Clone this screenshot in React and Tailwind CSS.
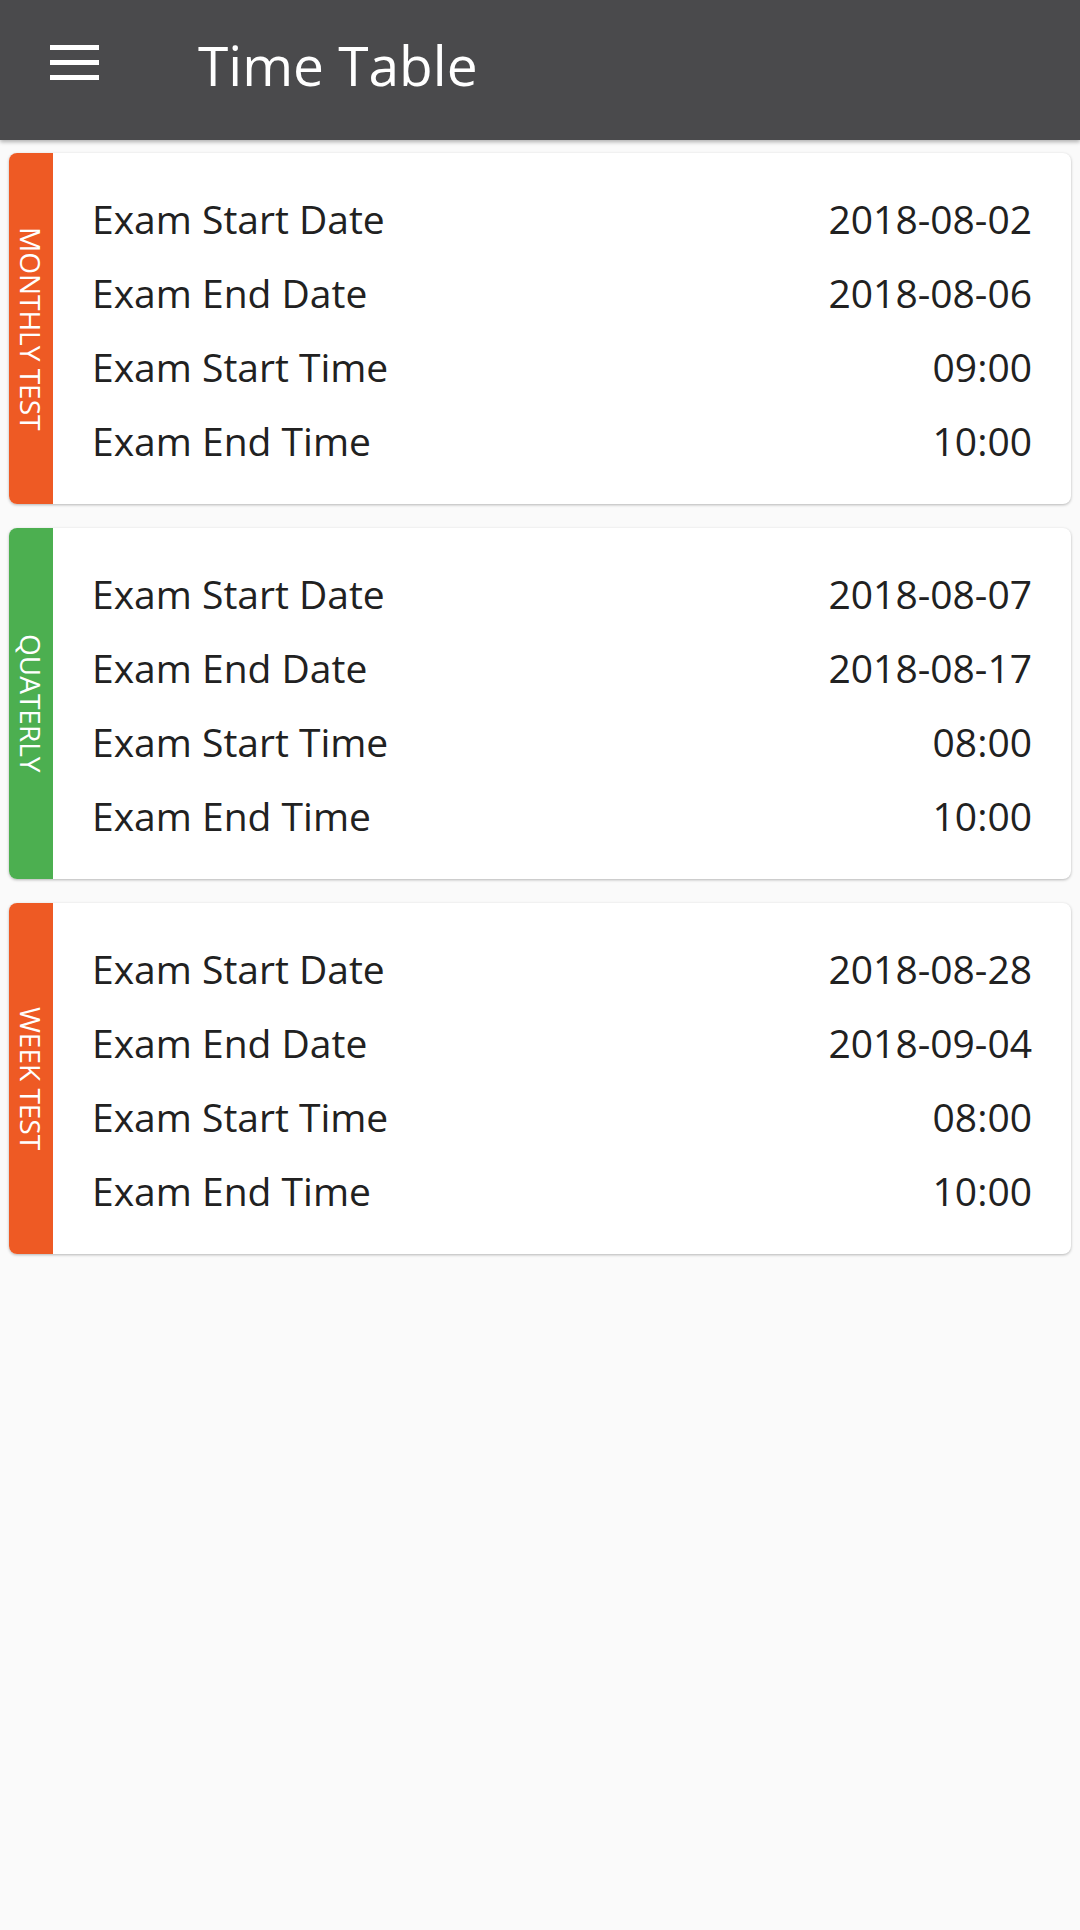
const exams = [
  {
    name: "MONTHLY TEST",
    color: "bg-[#ee5a24]",
    rows: [
      ["Exam Start Date", "2018-08-02"],
      ["Exam End Date", "2018-08-06"],
      ["Exam Start Time", "09:00"],
      ["Exam End Time", "10:00"],
    ],
  },
  {
    name: "QUATERLY",
    color: "bg-[#4caf50]",
    rows: [
      ["Exam Start Date", "2018-08-07"],
      ["Exam End Date", "2018-08-17"],
      ["Exam Start Time", "08:00"],
      ["Exam End Time", "10:00"],
    ],
  },
  {
    name: "WEEK TEST",
    color: "bg-[#ee5a24]",
    rows: [
      ["Exam Start Date", "2018-08-28"],
      ["Exam End Date", "2018-09-04"],
      ["Exam Start Time", "08:00"],
      ["Exam End Time", "10:00"],
    ],
  },
];

const ExamCard = ({ exam }) => (
  <div className="flex bg-white rounded-lg overflow-hidden shadow-[0_1px_3px_rgba(0,0,0,0.28)]">
    <div className={`${exam.color} w-[44px] flex items-center justify-center`}>
      <span className="[writing-mode:vertical-rl] text-white text-[28px] leading-none">
        {exam.name}
      </span>
    </div>
    <div className="flex-1 pl-[39px] pr-[39px] pt-[29px] pb-[26px]">
      {exam.rows.map(([label, value]) => (
        <div key={label} className="flex justify-between h-[74px] leading-[74px] text-[39px] text-[#212121]">
          <span>{label}</span>
          <span>{value}</span>
        </div>
      ))}
    </div>
  </div>
);

export default function App() {
  return (
    <div className="min-h-[1930px] bg-[#fafafa]" style={{ fontFamily: '"Open Sans", "Noto Sans", sans-serif' }}>
      <header className="h-[140px] bg-[#4a4a4c] flex items-start shadow-[0_2px_4px_rgba(0,0,0,0.3)] relative">
        <button className="ml-[50px] mt-[45px] w-[49px] h-[35px] flex flex-col justify-between">
          <span className="block h-[5px] w-full bg-white" />
          <span className="block h-[5px] w-full bg-white" />
          <span className="block h-[5px] w-full bg-white" />
        </button>
        <h1 className="ml-[99px] mt-[37px] text-white text-[55px] leading-none">Time Table</h1>
      </header>
      <main className="px-[9px] pt-[13px] flex flex-col gap-[24px]">
        {exams.map((exam) => (
          <ExamCard key={exam.name} exam={exam} />
        ))}
      </main>
    </div>
  );
}
